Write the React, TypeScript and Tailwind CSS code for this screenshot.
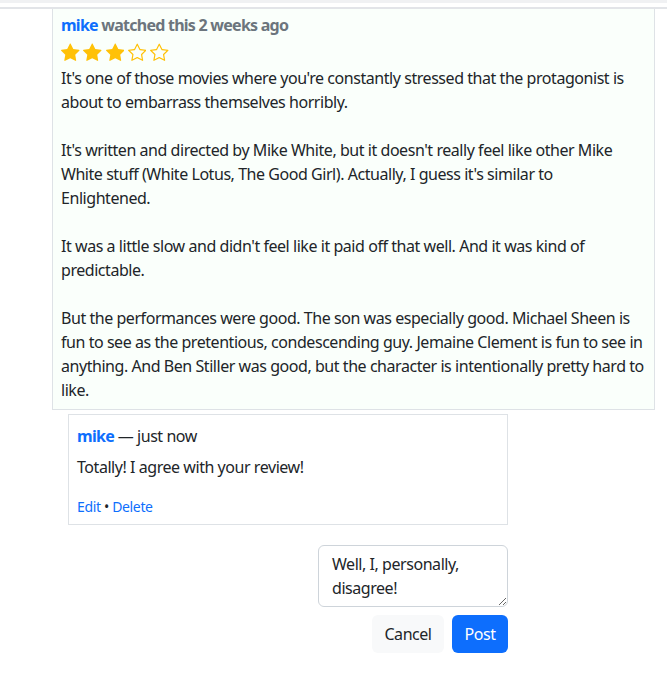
import React from "react";

const FilledStar = () => (
  <svg viewBox="0 0 16 16" className="w-[18.5px] h-[18.5px]" fill="#ffc107">
    <path d="M3.612 15.443c-.386.198-.824-.149-.746-.592l.83-4.73L.173 6.765c-.329-.314-.158-.888.283-.95l4.898-.696L7.538.792c.197-.39.73-.39.927 0l2.184 4.327 4.898.696c.441.062.612.636.282.95l-3.522 3.356.83 4.73c.078.443-.36.79-.746.592L8 13.187l-4.389 2.256z" />
  </svg>
);

const EmptyStar = () => (
  <svg viewBox="0 0 16 16" className="w-[18.5px] h-[18.5px]" fill="#ffc107">
    <path d="M2.866 14.85c-.078.444.36.791.746.593l4.39-2.256 4.389 2.256c.386.198.824-.149.746-.592l-.83-4.73 3.522-3.356c.33-.314.16-.888-.282-.95l-4.898-.696L8.465.792a.513.513 0 0 0-.927 0L5.354 5.12l-4.898.696c-.441.062-.612.636-.283.95l3.523 3.356-.83 4.73zm4.905-2.767-3.686 1.894.694-3.957a.565.565 0 0 0-.163-.505L1.71 6.745l4.052-.576a.525.525 0 0 0 .393-.288L8 2.223l1.847 3.658a.525.525 0 0 0 .393.288l4.052.575-2.906 2.77a.565.565 0 0 0-.163.506l.694 3.957-3.686-1.894a.503.503 0 0 0-.461 0z" />
  </svg>
);

const paragraphs = [
  [
    "It's one of those movies where you're constantly stressed that the protagonist is",
    "about to embarrass themselves horribly.",
  ],
  [
    "It's written and directed by Mike White, but it doesn't really feel like other Mike",
    "White stuff (White Lotus, The Good Girl). Actually, I guess it's similar to",
    "Enlightened.",
  ],
  [
    "It was a little slow and didn't feel like it paid off that well. And it was kind of",
    "predictable.",
  ],
  [
    "But the performances were good. The son was especially good. Michael Sheen is",
    "fun to see as the pretentious, condescending guy. Jemaine Clement is fun to see in",
    "anything. And Ben Stiller was good, but the character is intentionally pretty hard to",
    "like.",
  ],
];

export default function App() {
  return (
    <div
      className="w-[667px] h-[675px] bg-white text-[#212529] text-[16px] leading-6 tracking-[-0.45px] overflow-hidden"
      style={{ fontFamily: '"Noto Sans", "Open Sans", sans-serif' }}
    >
      <div className="h-[3px] bg-[#f0f1f3]" />
      <div className="h-[4px]" />
      <div className="border-t-2 border-[#e2e4e8]">
        {/* review */}
        <div className="ml-[52px] w-[603px] bg-[#fafffb] border-x border-b border-[#dee2e6] px-2 pt-[4px] pb-[7px]">
          <div className="font-bold text-[#6c757d] tracking-[-0.75px]">
            <span className="text-[#0d6efd]">mike</span> watched this 2 weeks ago
          </div>
          <div className="flex items-center gap-[3.8px] h-[29px] pt-[2px]">
            <FilledStar />
            <FilledStar />
            <FilledStar />
            <EmptyStar />
            <EmptyStar />
          </div>
          {paragraphs.map((lines, i) => (
            <p key={i} className={i < paragraphs.length - 1 ? "mb-6" : ""}>
              {lines.map((l, j) => (
                <span key={j} className="block whitespace-nowrap">
                  {l}
                </span>
              ))}
            </p>
          ))}
        </div>

        {/* comment */}
        <div className="ml-[68px] mt-[4px] w-[440px] h-[111px] border border-[#dee2e6] px-2 pt-[9px]">
          <div>
            <span className="font-bold text-[#0d6efd] tracking-[-0.7px]">mike</span> — just now
          </div>
          <div className="mt-[7px]">Totally! I agree with your review!</div>
          <div className="mt-[18px] text-[14px] leading-5 text-[#0d6efd] tracking-[-0.35px]">
            Edit <span className="text-[#212529]">•</span> Delete
          </div>
        </div>

        {/* reply form */}
        <div className="ml-[318px] mt-[20px] w-[190px] flex flex-col items-end">
          <textarea
            className="w-full h-[62px] border border-[#ced4da] rounded-md px-[13px] py-[6px] resize-y outline-none text-[#212529]"
            defaultValue="Well, I, personally, disagree!"
          />
          <div className="flex gap-2 mt-[8px]">
            <button className="h-[38px] w-[72px] rounded-md bg-[#f8f9fa] text-[#212529]">
              Cancel
            </button>
            <button className="h-[38px] w-[56px] rounded-md bg-[#0d6efd] text-white">
              Post
            </button>
          </div>
        </div>
      </div>
    </div>
  );
}
